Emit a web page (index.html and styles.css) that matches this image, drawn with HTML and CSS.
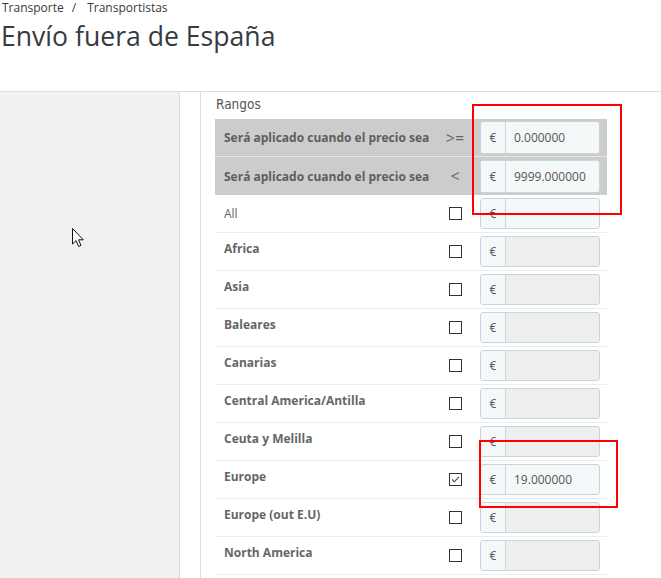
FILE: index.html
```html
<!DOCTYPE html>
<html lang="es">
<head>
<meta charset="utf-8">
<title>Envío fuera de España</title>
<link rel="stylesheet" href="styles.css">
</head>
<body>
<div class="breadcrumb"><span>Transporte</span><span class="sep">/</span><span>Transportistas</span></div>
<h1 class="title">Envío fuera de España</h1>
<div class="main">
  <aside class="sidebar"></aside>
  <div class="gutter"></div>
  <section class="content">
    <div class="legend">Rangos</div>
    <div class="table">
      <div class="row head">
        <div class="label">Será aplicado cuando el precio sea</div>
        <div class="mid op">&gt;=</div>
        <div class="cell"><div class="ig"><span class="addon">€</span><span class="field">0.000000</span></div></div>
      </div>
      <div class="row head">
        <div class="label">Será aplicado cuando el precio sea</div>
        <div class="mid op">&lt;</div>
        <div class="cell"><div class="ig"><span class="addon">€</span><span class="field">9999.000000</span></div></div>
      </div>
      <div class="row">
        <div class="label normal">All</div>
        <div class="mid"><span class="cb"></span></div>
        <div class="cell"><div class="ig"><span class="addon">€</span><span class="field"></span></div></div>
      </div>
      <div class="row">
        <div class="label">Africa</div>
        <div class="mid"><span class="cb"></span></div>
        <div class="cell"><div class="ig off"><span class="addon">€</span><span class="field"></span></div></div>
      </div>
      <div class="row">
        <div class="label">Asia</div>
        <div class="mid"><span class="cb"></span></div>
        <div class="cell"><div class="ig off"><span class="addon">€</span><span class="field"></span></div></div>
      </div>
      <div class="row">
        <div class="label">Baleares</div>
        <div class="mid"><span class="cb"></span></div>
        <div class="cell"><div class="ig off"><span class="addon">€</span><span class="field"></span></div></div>
      </div>
      <div class="row">
        <div class="label">Canarias</div>
        <div class="mid"><span class="cb"></span></div>
        <div class="cell"><div class="ig off"><span class="addon">€</span><span class="field"></span></div></div>
      </div>
      <div class="row">
        <div class="label">Central America/Antilla</div>
        <div class="mid"><span class="cb"></span></div>
        <div class="cell"><div class="ig off"><span class="addon">€</span><span class="field"></span></div></div>
      </div>
      <div class="row">
        <div class="label">Ceuta y Melilla</div>
        <div class="mid"><span class="cb"></span></div>
        <div class="cell"><div class="ig off"><span class="addon">€</span><span class="field"></span></div></div>
      </div>
      <div class="row">
        <div class="label">Europe</div>
        <div class="mid"><span class="cb checked"><svg viewBox="0 0 13 13" width="11" height="11"><path d="M2.5 6.5 L5.2 9.2 L10.5 3.5" fill="none" stroke="#444" stroke-width="1.3"/></svg></span></div>
        <div class="cell"><div class="ig"><span class="addon">€</span><span class="field">19.000000</span></div></div>
      </div>
      <div class="row">
        <div class="label">Europe (out E.U)</div>
        <div class="mid"><span class="cb"></span></div>
        <div class="cell"><div class="ig off"><span class="addon">€</span><span class="field"></span></div></div>
      </div>
      <div class="row">
        <div class="label">North America</div>
        <div class="mid"><span class="cb"></span></div>
        <div class="cell"><div class="ig off"><span class="addon">€</span><span class="field"></span></div></div>
      </div>
    </div>
  </section>
</div>
<div class="mark mark1"></div>
<div class="mark mark2"></div>
<svg class="cursor" width="13" height="20" viewBox="0 0 13 20"><path d="M0.5 0.5 L0.5 16 L4 12.6 L6.6 18.5 L9 17.4 L6.5 11.8 L11.3 11.8 Z" fill="#fff" stroke="#111" stroke-width="1" stroke-linejoin="round"/></svg>
</body>
</html>
```
FILE: styles.css
```css
html, body {
  margin: 0;
  padding: 0;
  background: #fff;
  font-family: "Open Sans", "Liberation Sans", sans-serif;
  color: #555;
  overflow: hidden;
}
.breadcrumb {
  height: 16px;
  line-height: 16px;
  font-size: 12px;
  padding-left: 2px;
  color: #363a41;
  display: flex;
}
.breadcrumb .sep {
  margin: 0 11px 0 8px;
}
.title {
  margin: 2px 0 37px 0;
  padding-left: 1px;
  height: 36px;
  line-height: 36px;
  font-size: 26.6px;
  font-weight: 400;
  color: #363a41;
}
.main {
  border-top: 1px solid #dedede;
  display: flex;
  height: 486px;
}
.sidebar {
  width: 179px;
  background: #eff1f2;
  border-right: 1px solid #dcdcdc;
}
.gutter {
  width: 20px;
  border-right: 1px solid #dcdcdc;
}
.content {
  padding: 3px 0 0 14px;
}
.legend {
  font-family: "DejaVu Sans Condensed", "DejaVu Sans", sans-serif;
  font-stretch: condensed;
  font-size: 13.5px;
  line-height: 18px;
  height: 18px;
  margin-bottom: 6px;
  padding-left: 1px;
  color: #555;
}
.table {
  width: 392px;
}
.row {
  display: grid;
  grid-template-columns: 225px 30px 137px;
  align-items: center;
  height: 37px;
  border-bottom: 1px solid #eaedef;
}
.row.head {
  background: #cccccc;
  border-bottom: 1px solid #e8e8e8;
}
.row.head:nth-child(2) {
  border-bottom: none;
  height: 38px;
}
.label {
  padding: 0 0 7px 9px;
  font-size: 12px;
  font-weight: 700;
  color: #666;
  white-space: nowrap;
}
.row.head .label {
  padding-bottom: 0;
  color: #5e5e5e;
}
.label.normal {
  font-weight: 400;
  padding-bottom: 1px;
}
.mid {
  display: flex;
  justify-content: center;
  align-items: center;
}
.op {
  font-size: 16px;
  color: #666;
}
.cb {
  width: 11px;
  height: 11px;
  border: 1px solid #333;
  background: #fff;
  display: flex;
  align-items: center;
  justify-content: center;
}
.cb svg {
  display: block;
}
.cell {
  padding-left: 10px;
}
.ig {
  display: flex;
  width: 120px;
  height: 31px;
  box-sizing: border-box;
  border: 1px solid #c7d6db;
  border-radius: 3px;
  overflow: hidden;
  font-size: 12px;
  background: #f5f8f9;
}
.row.head .ig {
  height: 33px;
}
.addon {
  width: 24px;
  border-right: 1px solid #c7d6db;
  display: flex;
  align-items: center;
  justify-content: center;
  color: #555;
  background: #f5f8f9;
}
.field {
  flex: 1;
  display: flex;
  align-items: center;
  padding-left: 8px;
  color: #555;
}
.ig.off .field {
  background: #eeeeee;
}
.mark {
  position: absolute;
  border: 2px solid #ff0000;
  box-sizing: border-box;
}
.mark1 {
  left: 472px;
  top: 104px;
  width: 150px;
  height: 111px;
}
.mark2 {
  left: 479px;
  top: 440px;
  width: 139px;
  height: 68px;
}
.cursor {
  position: absolute;
  left: 72px;
  top: 228px;
}
```
